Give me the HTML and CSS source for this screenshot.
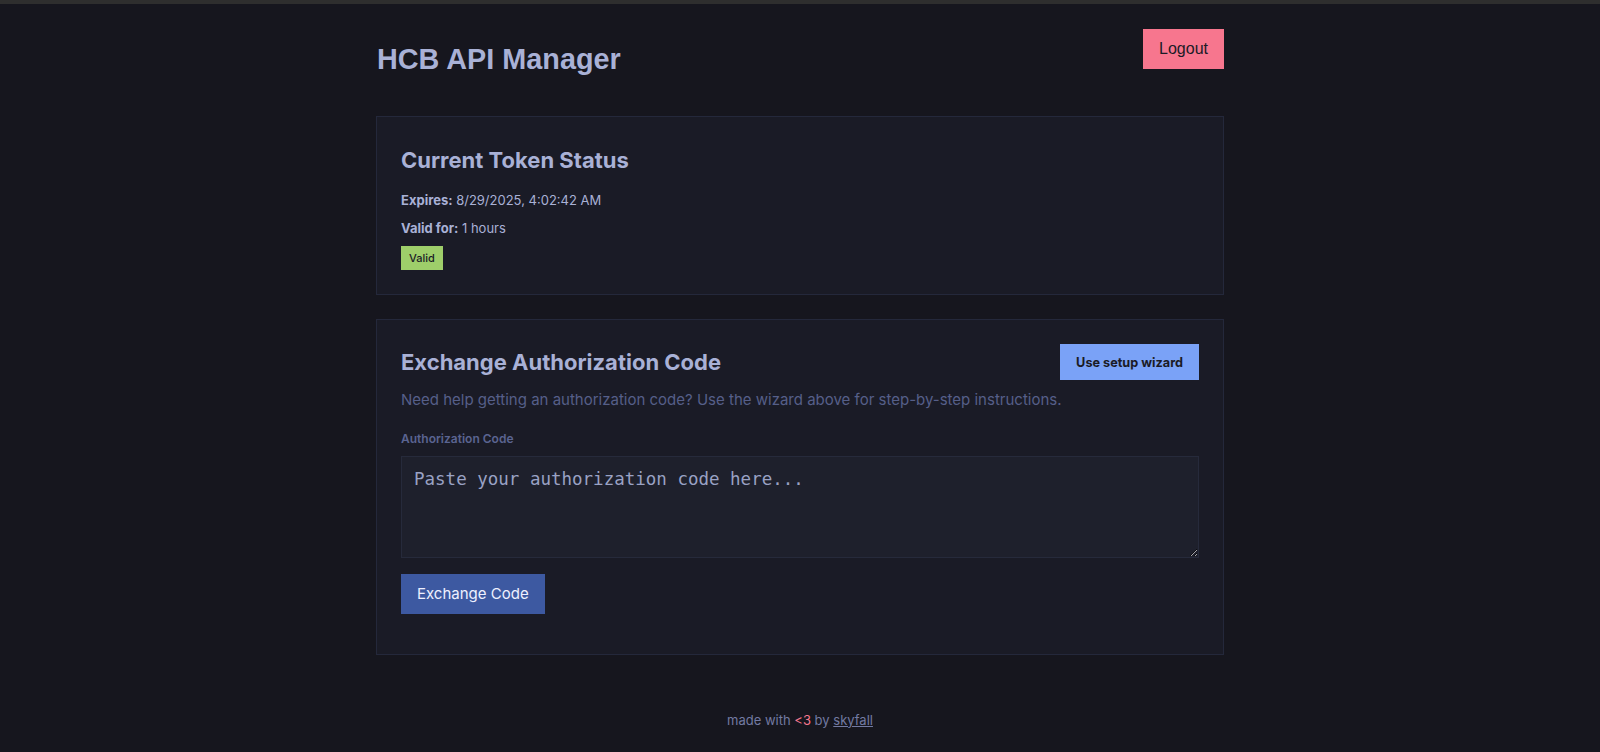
FILE: index.html
```html
<!DOCTYPE html>
<html lang="en">
<head>
<meta charset="utf-8">
<title>HCB API Manager</title>
<link rel="stylesheet" href="styles.css">
</head>
<body>
<div class="topbar"></div>
<main class="container">
  <header class="page-header">
    <h1 class="page-title">HCB API Manager</h1>
    <button class="btn btn-logout">Logout</button>
  </header>

  <section class="card card-status">
    <div class="card-head">
      <h2 class="card-title">Current Token Status</h2>
    </div>
    <p class="info"><strong>Expires:</strong> 8/29/2025, 4:02:42 AM</p>
    <p class="info"><strong>Valid for:</strong> 1 hours</p>
    <span class="badge">Valid</span>
  </section>

  <section class="card card-exchange">
    <div class="card-head">
      <h2 class="card-title">Exchange Authorization Code</h2>
      <button class="btn btn-wizard">Use setup wizard</button>
    </div>
    <p class="help">Need help getting an authorization code? Use the wizard above for step-by-step instructions.</p>
    <form class="form">
      <label class="label" for="code">Authorization Code</label>
      <textarea id="code" class="code-input" placeholder="Paste your authorization code here..."></textarea>
      <button type="button" class="btn btn-exchange">Exchange Code</button>
    </form>
  </section>

  <footer class="footer">made with <span class="heart">&lt;3</span> by <a href="#" class="footer-link">skyfall</a></footer>
</main>
</body>
</html>
```

FILE: styles.css
```css
* { box-sizing: border-box; }

html, body {
  margin: 0;
  padding: 0;
  background: #16161e;
}

body {
  font-family: Inter, "Noto Sans", sans-serif;
  color: #a9b1d6;
  min-height: 752px;
}

.topbar {
  height: 4px;
  background: #2e2e2e;
}

.container {
  width: 848px;
  margin: 0 auto;
  padding-top: 25px;
}

.page-header {
  display: flex;
  justify-content: space-between;
  align-items: flex-start;
  height: 87px;
}

.page-title {
  font-family: "Liberation Sans", Arial, sans-serif;
  font-size: 28.8px;
  font-weight: 700;
  margin: 14px 0 0 1px;
  color: #a9b1d6;
  line-height: 32px;
}

.btn {
  border: none;
  border-radius: 0;
  cursor: pointer;
  font-family: Inter, "Noto Sans", sans-serif;
}

.btn-logout {
  background: #f7768e;
  color: #1a1b26;
  font-family: "Liberation Sans", Arial, sans-serif;
  font-size: 16px;
  height: 40px;
  padding: 0 16px;
}

.card {
  background: #1a1b26;
  border: 1px solid #24283b;
  padding: 24px 24px 24px;
  margin-bottom: 24px;
}

.card-head {
  display: flex;
  justify-content: space-between;
  align-items: center;
  min-height: 36px;
}

.card-status .card-head { margin-bottom: 13px; }
.card-exchange .card-head { margin-bottom: 9px; }

.card-title {
  margin: 0;
  font-size: 22px;
  font-weight: 700;
  line-height: 28.8px;
  color: #a9b1d6;
}

.card-status .card-title { padding-top: 2px; }

.info {
  margin: 0 0 8px;
  font-size: 13px;
  line-height: 20px;
  color: #a9b1d6;
}

.info strong { font-weight: 700; }

.badge {
  display: inline-block;
  background: #9ece6a;
  color: #1a1b26;
  font-size: 11px;
  line-height: 16px;
  padding: 4px 8px;
  font-weight: 500;
}

.btn-wizard {
  background: #7aa2f7;
  color: #1a1b26;
  font-size: 12.7px;
  font-weight: 700;
  height: 36px;
  padding: 0 16px;
}

.help {
  margin: 0 0 18px;
  font-size: 15px;
  line-height: 22.5px;
  color: #565f89;
}

.form {
  display: flex;
  flex-direction: column;
  align-items: flex-start;
}

.label {
  font-size: 12px;
  line-height: 18px;
  font-weight: 600;
  color: #5a6491;
  margin-bottom: 8px;
}

.code-input {
  width: 100%;
  height: 102px;
  background: #1e202c;
  border: 1px solid #262a3b;
  border-radius: 0;
  padding: 12px;
  font-family: "DejaVu Sans Mono", monospace;
  font-size: 17.5px;
  color: #a9b1d6;
  outline: none;
}

.code-input::placeholder {
  color: #9aa2c4;
}

.btn-exchange {
  margin-top: 16px;
  margin-bottom: 16px;
  background: #3d59a1;
  color: #eef0ff;
  font-size: 15px;
  font-weight: 400;
  height: 40px;
  padding: 0 16px;
}

.footer {
  margin-top: 55px;
  text-align: center;
  font-size: 13px;
  line-height: 20px;
  color: #737aa2;
}

.heart { color: #f7768e; }

.footer-link {
  color: #737aa2;
  text-decoration: underline;
}
```
